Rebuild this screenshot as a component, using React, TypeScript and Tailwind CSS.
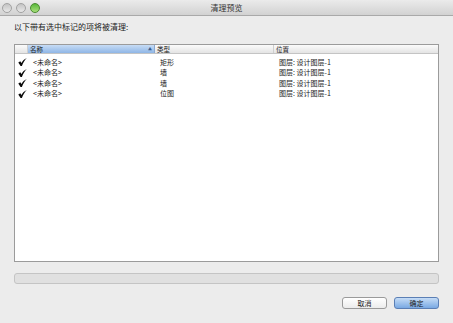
import React from "react"

const rows = [
    { name: "<未命名>", type: "矩形", loc: "图层: 设计图层-1" },
    { name: "<未命名>", type: "墙", loc: "图层: 设计图层-1" },
    { name: "<未命名>", type: "墙", loc: "图层: 设计图层-1" },
    { name: "<未命名>", type: "位图", loc: "图层: 设计图层-1" },
]

function Check() {
    return (
        <svg width="9" height="8" viewBox="0 0 9 8">
            <path d="M0.3 4.4 L2.3 3.3 L3.4 5 C4.6 2.8 6.4 1 8.8 0 C6.8 2 5.2 4.4 3.9 7.9 L2.6 7.9 Z" fill="#0a0a0a" />
        </svg>
    )
}

export default function App() {
    const font = { fontFamily: '"Noto Sans CJK SC", "Noto Sans", sans-serif' }
    return (
        <div className="w-[453px] h-[323px] bg-[#ececec] flex flex-col overflow-hidden text-[#1a1a1a]" style={font}>
            <div className="relative h-[16px] shrink-0 bg-gradient-to-b from-[#ebebeb] to-[#d2d2d2] border-b border-[#a9a9a9] flex items-center">
                <div className="flex gap-[4px] pl-[2px]">
                    <div className="w-[10px] h-[10px] rounded-full bg-gradient-to-b from-[#c4c4c4] to-[#e8e8e8] border border-[#a2a2a2]" />
                    <div className="w-[10px] h-[10px] rounded-full bg-gradient-to-b from-[#c4c4c4] to-[#e8e8e8] border border-[#a2a2a2]" />
                    <div className="w-[10px] h-[10px] rounded-full bg-gradient-to-b from-[#58b83a] to-[#a8e07a] border border-[#4a8a30]" />
                </div>
                <div className="absolute inset-0 flex items-center justify-center text-[8px] text-[#333]">清理预览</div>
            </div>

            <div className="flex flex-col px-[14px]">
                <div className="mt-[6px] mb-[12px] h-[10px] flex items-center text-[8px] leading-none">以下带有选中标记的项将被清理:</div>

                <div className="h-[218px] bg-white border border-[#9b9b9b] flex flex-col">
                    <div className="h-[8px] flex text-[6.5px] leading-[8px] bg-gradient-to-b from-[#fbfbfb] to-[#e4e4e4] border-b border-[#c4c4c4] box-content">
                        <div className="w-[13px] border-r border-[#cfcfcf]" />
                        <div className="w-[127px] flex justify-between items-center px-[2px] bg-gradient-to-b from-[#c7dcf5] to-[#8fb6e6] border-r border-[#8aa7cf]">
                            <span>名称</span>
                            <span className="text-[4px] text-[#3b5b8a]">▲</span>
                        </div>
                        <div className="w-[119px] px-[2px] border-r border-[#cfcfcf]">类型</div>
                        <div className="flex-1 px-[2px]">位置</div>
                    </div>
                    <div className="flex flex-col pt-[3px]">
                        {rows.map((r, i) => (
                            <div key={i} className="h-[10.5px] flex items-center text-[7px] leading-none">
                                <div className="w-[14px] flex justify-center pl-[1px]"><Check /></div>
                                <div className="w-[127px] pl-[4px]">{r.name}</div>
                                <div className="w-[119px] pl-[4px]">{r.type}</div>
                                <div className="flex-1 pl-[4px]">{r.loc}</div>
                            </div>
                        ))}
                    </div>
                </div>

                <div className="mt-[11px] h-[11px] rounded-[3px] bg-[#e0e0e0] border border-[#c4c4c4]" />

                <div className="mt-[13px] flex justify-end gap-[7px]">
                    <button className="w-[45px] h-[12px] rounded-[3px] bg-gradient-to-b from-[#ffffff] to-[#ececec] border border-[#9a9a9a] text-[7px] leading-none flex items-center justify-center">取消</button>
                    <button className="w-[45px] h-[12px] rounded-[3px] bg-gradient-to-b from-[#c5dcf6] to-[#79a9e3] border border-[#5b7fb5] text-[7px] leading-none flex items-center justify-center">确定</button>
                </div>
            </div>
        </div>
    )
}
